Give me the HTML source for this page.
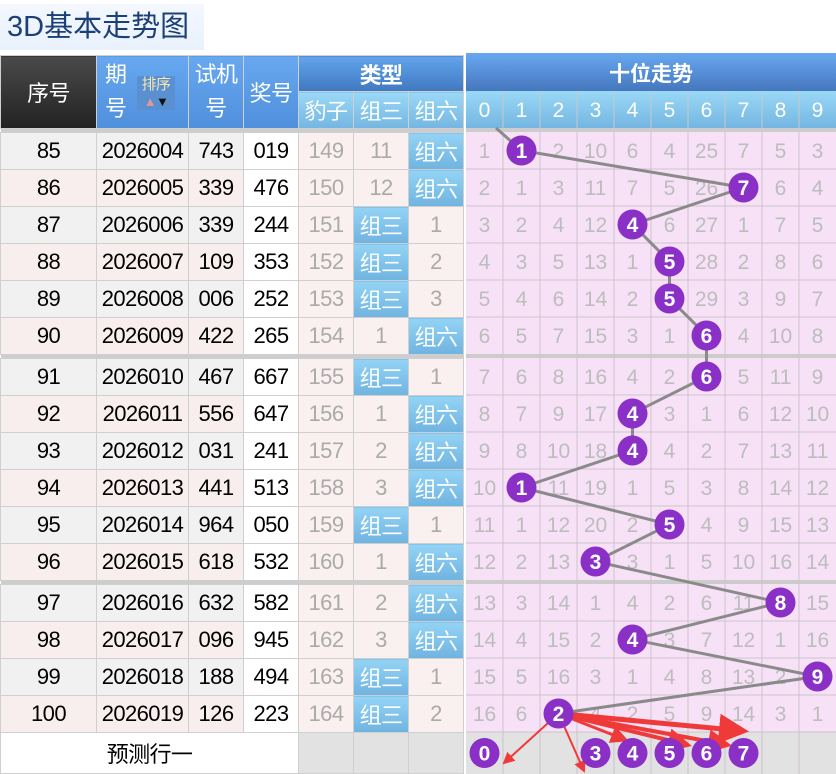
<!DOCTYPE html>
<html><head><meta charset="utf-8"><style>
body{margin:0;width:836px;height:774px;background:#fff;position:relative;overflow:hidden;font-family:"Liberation Sans","Noto Sans CJK SC",sans-serif}
.title{position:absolute;left:0;top:4px;width:204px;height:46px;background:linear-gradient(#f4f8fe,#e8f1fc);color:#1d3f78;font-size:29px;line-height:46px;padding-left:7px;box-sizing:border-box}
table{position:absolute;left:0;top:55px;border-collapse:collapse;table-layout:fixed;font-size:22px}
td{padding:0;text-align:center;border:1px solid #cfcfcf;height:36px;overflow:hidden;white-space:nowrap;letter-spacing:-0.6px}
.h{color:#fff;background:linear-gradient(#68a8f0,#4f8fdc);font-size:22px}
.hd{background:linear-gradient(#4a4a4a,#222);color:#fff}
.hs{background:linear-gradient(#9ad8f6,#74b6e2);color:#fff;height:36px}
.sep td{height:3px;background:#cdcdcd;border:none}
.g{background:#f1f1f1}.p{background:#f9eeee}.w{background:#fff}
.t{background:#faf0f0;color:#aaa}
.b{background:linear-gradient(#93d3f5,#6fb3e0);color:#fff}
</style></head><body>
<div class="title">3D基本走势图</div>
<table>
<colgroup><col style="width:96px"><col style="width:92px"><col style="width:55px"><col style="width:55px"><col style="width:55px"><col style="width:55px"><col style="width:55px"></colgroup>
<tr><td class="hd" rowspan="2" style="height:72px">序号</td><td class="h" rowspan="2" style="text-align:left;padding-left:8px;line-height:34px;position:relative">期<br>号<span style="position:absolute;left:40px;top:20px;width:38px;height:34px;background:#5a8fd0;font-size:15px;line-height:17px;color:#f3e9b0;text-align:center">排序<br><span style="color:#d99;font-size:13px">▲</span><span style="color:#111;font-size:13px">▼</span></span></td><td class="h" rowspan="2" style="line-height:34px">试机<br>号</td><td class="h" rowspan="2">奖号</td><td class="h" colspan="3" style="height:35px;background:linear-gradient(#62a4ec,#3f78c0);font-weight:bold">类型</td></tr>
<tr><td class="hs">豹子</td><td class="hs">组三</td><td class="hs">组六</td></tr>
<tr class="sep"><td colspan="7"></td></tr>
<tr><td class="g">85</td><td class="g">2026004</td><td class="g">743</td><td class="w">019</td><td class="t">149</td><td class="t">11</td><td class="b">组六</td></tr>
<tr><td class="p">86</td><td class="p">2026005</td><td class="p">339</td><td class="w">476</td><td class="t">150</td><td class="t">12</td><td class="b">组六</td></tr>
<tr><td class="g">87</td><td class="g">2026006</td><td class="g">339</td><td class="w">244</td><td class="t">151</td><td class="b">组三</td><td class="t">1</td></tr>
<tr><td class="p">88</td><td class="p">2026007</td><td class="p">109</td><td class="w">353</td><td class="t">152</td><td class="b">组三</td><td class="t">2</td></tr>
<tr><td class="g">89</td><td class="g">2026008</td><td class="g">006</td><td class="w">252</td><td class="t">153</td><td class="b">组三</td><td class="t">3</td></tr>
<tr><td class="p">90</td><td class="p">2026009</td><td class="p">422</td><td class="w">265</td><td class="t">154</td><td class="t">1</td><td class="b">组六</td></tr>
<tr class="sep"><td colspan="7"></td></tr>
<tr><td class="g">91</td><td class="g">2026010</td><td class="g">467</td><td class="w">667</td><td class="t">155</td><td class="b">组三</td><td class="t">1</td></tr>
<tr><td class="p">92</td><td class="p">2026011</td><td class="p">556</td><td class="w">647</td><td class="t">156</td><td class="t">1</td><td class="b">组六</td></tr>
<tr><td class="g">93</td><td class="g">2026012</td><td class="g">031</td><td class="w">241</td><td class="t">157</td><td class="t">2</td><td class="b">组六</td></tr>
<tr><td class="p">94</td><td class="p">2026013</td><td class="p">441</td><td class="w">513</td><td class="t">158</td><td class="t">3</td><td class="b">组六</td></tr>
<tr><td class="g">95</td><td class="g">2026014</td><td class="g">964</td><td class="w">050</td><td class="t">159</td><td class="b">组三</td><td class="t">1</td></tr>
<tr><td class="p">96</td><td class="p">2026015</td><td class="p">618</td><td class="w">532</td><td class="t">160</td><td class="t">1</td><td class="b">组六</td></tr>
<tr class="sep"><td colspan="7"></td></tr>
<tr><td class="g">97</td><td class="g">2026016</td><td class="g">632</td><td class="w">582</td><td class="t">161</td><td class="t">2</td><td class="b">组六</td></tr>
<tr><td class="p">98</td><td class="p">2026017</td><td class="p">096</td><td class="w">945</td><td class="t">162</td><td class="t">3</td><td class="b">组六</td></tr>
<tr><td class="g">99</td><td class="g">2026018</td><td class="g">188</td><td class="w">494</td><td class="t">163</td><td class="b">组三</td><td class="t">1</td></tr>
<tr><td class="p">100</td><td class="p">2026019</td><td class="p">126</td><td class="w">223</td><td class="t">164</td><td class="b">组三</td><td class="t">2</td></tr>
<tr><td class="w" colspan="4" style="height:40px">预测行一</td><td style="background:#e2e2e2"></td><td style="background:#e2e2e2"></td><td style="background:#e2e2e2"></td></tr>
</table>

<svg style="position:absolute;left:466px;top:53px" width="370" height="721" viewBox="0 -2 370 721" font-family="Liberation Sans, sans-serif">
<defs>
<linearGradient id="hg" x1="0" y1="0" x2="0" y2="1"><stop offset="0" stop-color="#68a8f0"/><stop offset="1" stop-color="#4577bd"/></linearGradient>
<linearGradient id="sg" x1="0" y1="0" x2="0" y2="1"><stop offset="0" stop-color="#9ad8f6"/><stop offset="1" stop-color="#74b6e2"/></linearGradient>
<marker id="ar" markerWidth="6" markerHeight="6" refX="5" refY="3" orient="auto"><path d="M0,0L6,3L0,6z" fill="#f03a3a"/></marker>
</defs>
<rect x="0" y="-2" width="370" height="38" fill="url(#hg)"/>
<text x="185" y="26" fill="#fff" font-size="21" font-weight="bold" text-anchor="middle" font-family="Liberation Sans, Noto Sans CJK SC, sans-serif">十位走势</text>
<rect x="0" y="36" width="370" height="37" fill="url(#sg)"/>
<g fill="#fff" font-size="21" text-anchor="middle">
<text x="18.5" y="62">0</text><text x="55.5" y="62">1</text><text x="92.5" y="62">2</text><text x="129.5" y="62">3</text><text x="166.5" y="62">4</text><text x="203.5" y="62">5</text><text x="240.5" y="62">6</text><text x="277.5" y="62">7</text><text x="314.5" y="62">8</text><text x="351.5" y="62">9</text></g>
<g stroke="#c8c8c8"><line x1="37" y1="36" x2="37" y2="73"/><line x1="74" y1="36" x2="74" y2="73"/><line x1="111" y1="36" x2="111" y2="73"/><line x1="148" y1="36" x2="148" y2="73"/><line x1="185" y1="36" x2="185" y2="73"/><line x1="222" y1="36" x2="222" y2="73"/><line x1="259" y1="36" x2="259" y2="73"/><line x1="296" y1="36" x2="296" y2="73"/><line x1="333" y1="36" x2="333" y2="73"/></g>
<rect x="0" y="73" width="370" height="4" fill="#ccc"/>
<rect x="0" y="77" width="370" height="222" fill="#f6e1f6"/>
<rect x="0" y="299" width="370" height="4" fill="#ccc"/>
<rect x="0" y="303" width="370" height="222" fill="#f6e1f6"/>
<rect x="0" y="525" width="370" height="4" fill="#ccc"/>
<rect x="0" y="529" width="370" height="148" fill="#f6e1f6"/>
<rect x="0" y="677" width="370" height="42" fill="#e2e2e2"/>
<g stroke="#cfc3cf" stroke-width="1">
<line x1="37" y1="77" x2="37" y2="719"/><line x1="74" y1="77" x2="74" y2="719"/><line x1="111" y1="77" x2="111" y2="719"/><line x1="148" y1="77" x2="148" y2="719"/><line x1="185" y1="77" x2="185" y2="719"/><line x1="222" y1="77" x2="222" y2="719"/><line x1="259" y1="77" x2="259" y2="719"/><line x1="296" y1="77" x2="296" y2="719"/><line x1="333" y1="77" x2="333" y2="719"/>
<line x1="0" y1="114" x2="370" y2="114"/><line x1="0" y1="151" x2="370" y2="151"/><line x1="0" y1="188" x2="370" y2="188"/><line x1="0" y1="225" x2="370" y2="225"/><line x1="0" y1="262" x2="370" y2="262"/>
<line x1="0" y1="340" x2="370" y2="340"/><line x1="0" y1="377" x2="370" y2="377"/><line x1="0" y1="414" x2="370" y2="414"/><line x1="0" y1="451" x2="370" y2="451"/><line x1="0" y1="488" x2="370" y2="488"/>
<line x1="0" y1="566" x2="370" y2="566"/><line x1="0" y1="603" x2="370" y2="603"/><line x1="0" y1="640" x2="370" y2="640"/><line x1="0" y1="677" x2="370" y2="677"/>
</g>
<g fill="#bdbdbd" font-size="21" text-anchor="middle">
<text x="18.5" y="103">1</text><text x="92.5" y="103">2</text><text x="129.5" y="103">10</text><text x="166.5" y="103">6</text><text x="203.5" y="103">4</text><text x="240.5" y="103">25</text><text x="277.5" y="103">7</text><text x="314.5" y="103">5</text><text x="351.5" y="103">3</text>
<text x="18.5" y="140">2</text><text x="55.5" y="140">1</text><text x="92.5" y="140">3</text><text x="129.5" y="140">11</text><text x="166.5" y="140">7</text><text x="203.5" y="140">5</text><text x="240.5" y="140">26</text><text x="314.5" y="140">6</text><text x="351.5" y="140">4</text>
<text x="18.5" y="177">3</text><text x="55.5" y="177">2</text><text x="92.5" y="177">4</text><text x="129.5" y="177">12</text><text x="203.5" y="177">6</text><text x="240.5" y="177">27</text><text x="277.5" y="177">1</text><text x="314.5" y="177">7</text><text x="351.5" y="177">5</text>
<text x="18.5" y="214">4</text><text x="55.5" y="214">3</text><text x="92.5" y="214">5</text><text x="129.5" y="214">13</text><text x="166.5" y="214">1</text><text x="240.5" y="214">28</text><text x="277.5" y="214">2</text><text x="314.5" y="214">8</text><text x="351.5" y="214">6</text>
<text x="18.5" y="251">5</text><text x="55.5" y="251">4</text><text x="92.5" y="251">6</text><text x="129.5" y="251">14</text><text x="166.5" y="251">2</text><text x="240.5" y="251">29</text><text x="277.5" y="251">3</text><text x="314.5" y="251">9</text><text x="351.5" y="251">7</text>
<text x="18.5" y="288">6</text><text x="55.5" y="288">5</text><text x="92.5" y="288">7</text><text x="129.5" y="288">15</text><text x="166.5" y="288">3</text><text x="203.5" y="288">1</text><text x="277.5" y="288">4</text><text x="314.5" y="288">10</text><text x="351.5" y="288">8</text>
<text x="18.5" y="329">7</text><text x="55.5" y="329">6</text><text x="92.5" y="329">8</text><text x="129.5" y="329">16</text><text x="166.5" y="329">4</text><text x="203.5" y="329">2</text><text x="277.5" y="329">5</text><text x="314.5" y="329">11</text><text x="351.5" y="329">9</text>
<text x="18.5" y="366">8</text><text x="55.5" y="366">7</text><text x="92.5" y="366">9</text><text x="129.5" y="366">17</text><text x="203.5" y="366">3</text><text x="240.5" y="366">1</text><text x="277.5" y="366">6</text><text x="314.5" y="366">12</text><text x="351.5" y="366">10</text>
<text x="18.5" y="403">9</text><text x="55.5" y="403">8</text><text x="92.5" y="403">10</text><text x="129.5" y="403">18</text><text x="203.5" y="403">4</text><text x="240.5" y="403">2</text><text x="277.5" y="403">7</text><text x="314.5" y="403">13</text><text x="351.5" y="403">11</text>
<text x="18.5" y="440">10</text><text x="92.5" y="440">11</text><text x="129.5" y="440">19</text><text x="166.5" y="440">1</text><text x="203.5" y="440">5</text><text x="240.5" y="440">3</text><text x="277.5" y="440">8</text><text x="314.5" y="440">14</text><text x="351.5" y="440">12</text>
<text x="18.5" y="477">11</text><text x="55.5" y="477">1</text><text x="92.5" y="477">12</text><text x="129.5" y="477">20</text><text x="166.5" y="477">2</text><text x="240.5" y="477">4</text><text x="277.5" y="477">9</text><text x="314.5" y="477">15</text><text x="351.5" y="477">13</text>
<text x="18.5" y="514">12</text><text x="55.5" y="514">2</text><text x="92.5" y="514">13</text><text x="166.5" y="514">3</text><text x="203.5" y="514">1</text><text x="240.5" y="514">5</text><text x="277.5" y="514">10</text><text x="314.5" y="514">16</text><text x="351.5" y="514">14</text>
<text x="18.5" y="555">13</text><text x="55.5" y="555">3</text><text x="92.5" y="555">14</text><text x="129.5" y="555">1</text><text x="166.5" y="555">4</text><text x="203.5" y="555">2</text><text x="240.5" y="555">6</text><text x="277.5" y="555">11</text><text x="351.5" y="555">15</text>
<text x="18.5" y="592">14</text><text x="55.5" y="592">4</text><text x="92.5" y="592">15</text><text x="129.5" y="592">2</text><text x="203.5" y="592">3</text><text x="240.5" y="592">7</text><text x="277.5" y="592">12</text><text x="314.5" y="592">1</text><text x="351.5" y="592">16</text>
<text x="18.5" y="629">15</text><text x="55.5" y="629">5</text><text x="92.5" y="629">16</text><text x="129.5" y="629">3</text><text x="166.5" y="629">1</text><text x="203.5" y="629">4</text><text x="240.5" y="629">8</text><text x="277.5" y="629">13</text><text x="314.5" y="629">2</text>
<text x="18.5" y="666">16</text><text x="55.5" y="666">6</text><text x="129.5" y="666">4</text><text x="166.5" y="666">2</text><text x="203.5" y="666">5</text><text x="240.5" y="666">9</text><text x="277.5" y="666">14</text><text x="314.5" y="666">3</text><text x="351.5" y="666">1</text>
</g>
<polyline fill="none" stroke="#8a8a8a" stroke-width="3" points="30,73 55.5,95.5 277.5,132.5 166.5,169.5 203.5,206.5 203.5,243.5 240.5,280.5 240.5,321.5 166.5,358.5 166.5,395.5 55.5,432.5 203.5,469.5 129.5,506.5 314.5,547.5 166.5,584.5 351.5,621.5 92.5,658.5"/>
<g stroke="#f03a3a" stroke-width="2" fill="none" marker-end="url(#ar)">
<line x1="92.5" y1="658.5" x2="38" y2="708"/>
<line x1="92.5" y1="658.5" x2="118" y2="716"/>
<line x1="92.5" y1="658.5" x2="160" y2="685" stroke-width="3"/>
<line x1="92.5" y1="658.5" x2="222" y2="690" stroke-width="4"/>
<line x1="92.5" y1="658.5" x2="262" y2="690" stroke-width="4"/>
<line x1="92.5" y1="658.5" x2="278" y2="676" stroke-width="5"/>
</g>
<g fill="#8a30c6">
<circle cx="55.5" cy="95.5" r="15"/><circle cx="277.5" cy="132.5" r="15"/><circle cx="166.5" cy="169.5" r="15"/><circle cx="203.5" cy="206.5" r="15"/><circle cx="203.5" cy="243.5" r="15"/><circle cx="240.5" cy="280.5" r="15"/><circle cx="240.5" cy="321.5" r="15"/><circle cx="166.5" cy="358.5" r="15"/><circle cx="166.5" cy="395.5" r="15"/><circle cx="55.5" cy="432.5" r="15"/><circle cx="203.5" cy="469.5" r="15"/><circle cx="129.5" cy="506.5" r="15"/><circle cx="314.5" cy="547.5" r="15"/><circle cx="166.5" cy="584.5" r="15"/><circle cx="351.5" cy="621.5" r="15"/><circle cx="92.5" cy="658.5" r="15"/>
<circle cx="18.5" cy="698" r="15"/><circle cx="129.5" cy="698" r="15"/><circle cx="166.5" cy="698" r="15"/><circle cx="203.5" cy="698" r="15"/><circle cx="240.5" cy="698" r="15"/><circle cx="277.5" cy="698" r="15"/>
</g>
<g fill="#fff" font-size="21" font-weight="bold" text-anchor="middle">
<text x="55.5" y="103">1</text><text x="277.5" y="140">7</text><text x="166.5" y="177">4</text><text x="203.5" y="214">5</text><text x="203.5" y="251">5</text><text x="240.5" y="288">6</text><text x="240.5" y="329">6</text><text x="166.5" y="366">4</text><text x="166.5" y="403">4</text><text x="55.5" y="440">1</text><text x="203.5" y="477">5</text><text x="129.5" y="514">3</text><text x="314.5" y="555">8</text><text x="166.5" y="592">4</text><text x="351.5" y="629">9</text><text x="92.5" y="666">2</text>
<text x="18.5" y="705.5">0</text><text x="129.5" y="705.5">3</text><text x="166.5" y="705.5">4</text><text x="203.5" y="705.5">5</text><text x="240.5" y="705.5">6</text><text x="277.5" y="705.5">7</text>
</g>
</svg>
</body></html>
